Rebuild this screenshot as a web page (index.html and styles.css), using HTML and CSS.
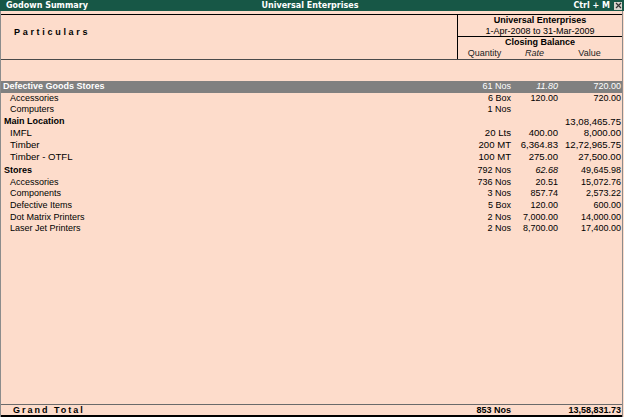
FILE: index.html
```html
<!DOCTYPE html>
<html>
<head>
<meta charset="utf-8">
<link rel="stylesheet" href="styles.css">
</head>
<body>
<div class="window">
  <div class="titlebar">
    <div class="t-left">Godown Summary</div>
    <div class="t-center">Universal Enterprises</div>
    <div class="t-right"><span>Ctrl + M</span><span class="close">
      <svg width="7" height="7" viewBox="0 0 7 7"><path d="M1 1L6 6M6 1L1 6" stroke="#333" stroke-width="1.2"/></svg>
    </span></div>
  </div>
  <div class="strip"></div>
  <div class="header">
    <div class="h-left"><span class="particulars">Particulars</span></div>
    <div class="h-right">
      <div class="h-company">
        <div class="bold">Universal Enterprises</div>
        <div>1-Apr-2008 to 31-Mar-2009</div>
      </div>
      <div class="h-balance">
        <div class="bold">Closing Balance</div>
        <div class="h-cols">
          <span>Quantity</span><span class="ital">Rate</span><span>Value</span>
        </div>
      </div>
    </div>
  </div>
  <div class="content">
    <div class="row group selected"><span class="name">Defective Goods Stores</span><span class="num">61 Nos</span><span class="num ital">11.80</span><span class="num">720.00</span></div>
    <div class="row"><span class="name item">Accessories</span><span class="num">6 Box</span><span class="num">120.00</span><span class="num">720.00</span></div>
    <div class="row"><span class="name item">Computers</span><span class="num">1 Nos</span><span class="num"></span><span class="num"></span></div>
    <div class="row group"><span class="name">Main Location</span><span class="num"></span><span class="num"></span><span class="num big">13,08,465.75</span></div>
    <div class="row big"><span class="name item">IMFL</span><span class="num">20 Lts</span><span class="num">400.00</span><span class="num">8,000.00</span></div>
    <div class="row big"><span class="name item">Timber</span><span class="num">200 MT</span><span class="num">6,364.83</span><span class="num">12,72,965.75</span></div>
    <div class="row big"><span class="name item">Timber - OTFL</span><span class="num">100 MT</span><span class="num">275.00</span><span class="num">27,500.00</span></div>
    <div class="row group gap"><span class="name">Stores</span><span class="num">792 Nos</span><span class="num ital">62.68</span><span class="num">49,645.98</span></div>
    <div class="row"><span class="name item">Accessories</span><span class="num">736 Nos</span><span class="num">20.51</span><span class="num">15,072.76</span></div>
    <div class="row"><span class="name item">Components</span><span class="num">3 Nos</span><span class="num">857.74</span><span class="num">2,573.22</span></div>
    <div class="row"><span class="name item">Defective Items</span><span class="num">5 Box</span><span class="num">120.00</span><span class="num">600.00</span></div>
    <div class="row"><span class="name item">Dot Matrix Printers</span><span class="num">2 Nos</span><span class="num">7,000.00</span><span class="num">14,000.00</span></div>
    <div class="row"><span class="name item">Laser Jet Printers</span><span class="num">2 Nos</span><span class="num">8,700.00</span><span class="num">17,400.00</span></div>
  </div>
  <div class="total row">
    <span class="name grand">Grand Total</span><span class="num">853 Nos</span><span class="num"></span><span class="num">13,58,831.73</span>
  </div>
</div>
</body>
</html>
```

FILE: styles.css
```css
html, body {
  margin: 0;
  padding: 0;
  background: #fddccb;
}
body {
  width: 624px;
  height: 417px;
  overflow: hidden;
  font-family: "Liberation Sans", Arial, sans-serif;
  font-size: 9px;
  color: #000;
}
.window {
  width: 623px;
  height: 417px;
  box-sizing: border-box;
  border-left: 1px solid #8c8c8c;
  border-right: 1px solid #8c8c8c;
  display: flex;
  flex-direction: column;
  background: #fddccb;
}
.titlebar {
  height: 11px;
  margin-left: -1px;
  margin-right: -2px;
  background: #175746;
  color: #fff;
  font-family: "DejaVu Sans", Verdana, sans-serif;
  font-weight: bold;
  font-size: 8px;
  line-height: 11px;
  display: grid;
  grid-template-columns: 1fr auto 1fr;
}
.t-left { padding-left: 6px; }
.t-center { padding-right: 4px; }
.t-right {
  display: flex;
  justify-content: flex-end;
  align-items: center;
  gap: 4px;
  padding-right: 2px;
}
.close {
  width: 8px;
  height: 8px;
  background: #d8d4cc;
  display: flex;
  align-items: center;
  justify-content: center;
}
.close svg { display: block; }
.strip { height: 3px; }
.header {
  height: 46px;
  box-sizing: border-box;
  border-top: 1px solid #000;
  border-bottom: 1px solid #4a4a4a;
  display: flex;
}
.h-left {
  width: 456px;
  padding: 12px 0 0 13px;
  box-sizing: border-box;
}
.particulars {
  font-weight: bold;
  letter-spacing: 2.7px;
}
.h-right {
  flex: 1;
  border-left: 1px solid #000;
  display: flex;
  flex-direction: column;
  text-align: center;
}
.h-company {
  height: 21px;
  border-bottom: 1px solid #000;
  line-height: 10.5px;
}
.h-balance {
  line-height: 11px;
}
.h-cols {
  display: grid;
  grid-template-columns: 53px 47px 63px;
  color: #222;
}
.bold { font-weight: bold; }
.ital { font-style: italic; }
.content {
  flex: 1;
  padding-top: 21px;
}
.row {
  display: grid;
  grid-template-columns: 1fr 54px 47px 63px;
  padding-right: 1px;
  height: 11.6px;
  line-height: 11.6px;
  white-space: nowrap;
}
.num { text-align: right; }
.name { padding-left: 3px; }
.name.item { padding-left: 9px; }
.group { font-weight: bold; }
.group .num { font-weight: normal; }
.selected {
  background: #808080;
  color: #fff;
}
.selected .name { padding-left: 2px; }
.big { font-size: 9.6px; }
.gap { margin-top: 3px; }
.total {
  height: 13px;
  line-height: 11px;
  box-sizing: border-box;
  border-top: 1px solid #6a6a6a;
  border-bottom: 2px solid #000;
  font-weight: bold;
}
.grand {
  padding-left: 12px;
  letter-spacing: 2px;
}
```
